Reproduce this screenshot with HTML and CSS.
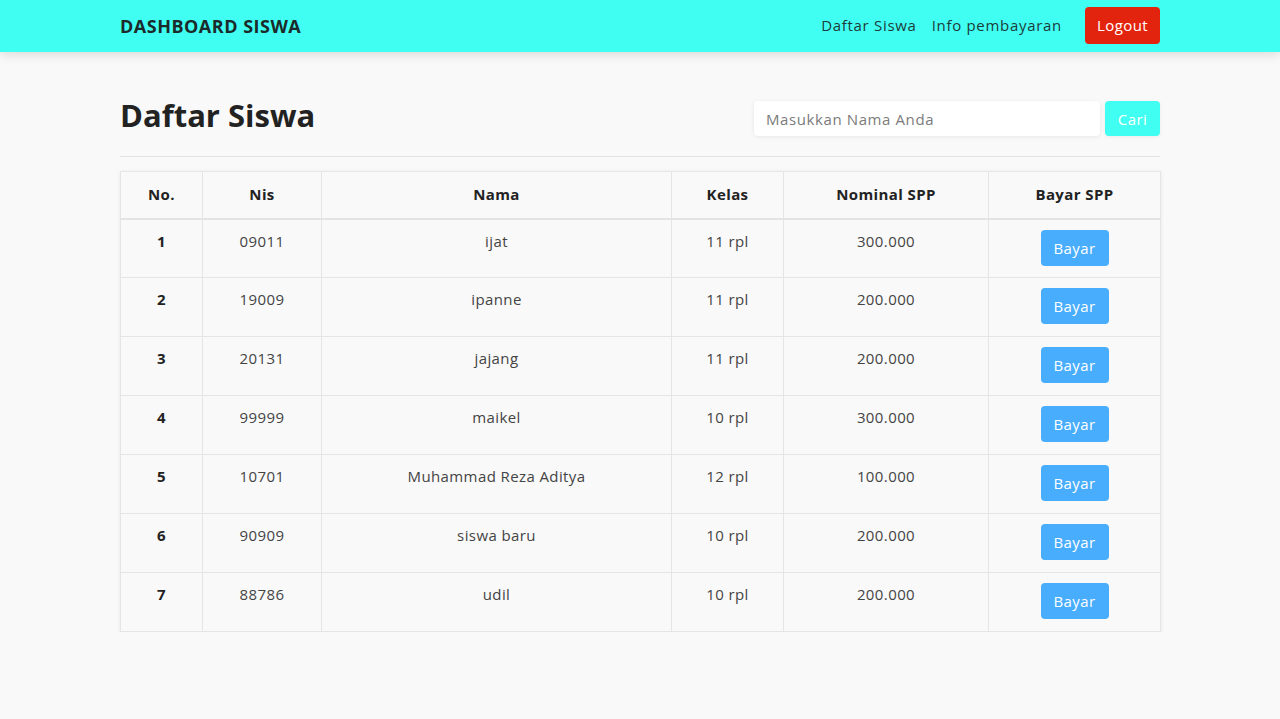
FILE: index.html
```html
<!DOCTYPE html>
<html lang="id">
<head>
<meta charset="utf-8">
<title>Dashboard Siswa</title>
<link rel="stylesheet" href="styles.css">
</head>
<body>
<nav class="navbar">
  <div class="container nav-inner">
    <a class="brand" href="#">DASHBOARD SISWA</a>
    <div class="nav-links">
      <a href="#" class="nav-link">Daftar Siswa</a>
      <a href="#" class="nav-link">Info pembayaran</a>
      <a href="#" class="btn-logout">Logout</a>
    </div>
  </div>
</nav>
<main class="container">
  <div class="page-head">
    <h1 class="title">Daftar Siswa</h1>
    <form class="search">
      <input class="search-input" type="text" placeholder="Masukkan Nama Anda">
      <button class="btn-cari" type="button">Cari</button>
    </form>
  </div>
  <hr class="divider">
  <table class="data-table">
    <colgroup>
      <col class="c1"><col class="c2"><col class="c3"><col class="c4"><col class="c5"><col class="c6">
    </colgroup>
    <thead>
      <tr><th>No.</th><th>Nis</th><th>Nama</th><th>Kelas</th><th>Nominal SPP</th><th>Bayar SPP</th></tr>
    </thead>
    <tbody>
      <tr><th>1</th><td>09011</td><td>ijat</td><td>11 rpl</td><td>300.000</td><td><a class="btn-bayar" href="#">Bayar</a></td></tr>
      <tr><th>2</th><td>19009</td><td>ipanne</td><td>11 rpl</td><td>200.000</td><td><a class="btn-bayar" href="#">Bayar</a></td></tr>
      <tr><th>3</th><td>20131</td><td>jajang</td><td>11 rpl</td><td>200.000</td><td><a class="btn-bayar" href="#">Bayar</a></td></tr>
      <tr><th>4</th><td>99999</td><td>maikel</td><td>10 rpl</td><td>300.000</td><td><a class="btn-bayar" href="#">Bayar</a></td></tr>
      <tr><th>5</th><td>10701</td><td>Muhammad Reza Aditya</td><td>12 rpl</td><td>100.000</td><td><a class="btn-bayar" href="#">Bayar</a></td></tr>
      <tr><th>6</th><td>90909</td><td>siswa baru</td><td>10 rpl</td><td>200.000</td><td><a class="btn-bayar" href="#">Bayar</a></td></tr>
      <tr><th>7</th><td>88786</td><td>udil</td><td>10 rpl</td><td>200.000</td><td><a class="btn-bayar" href="#">Bayar</a></td></tr>
    </tbody>
  </table>
</main>
</body>
</html>
```

FILE: styles.css
```css
* { box-sizing: border-box; }
body {
  margin: 0;
  background: #f9f9f9;
  font-family: "Open Sans", "DejaVu Sans", sans-serif;
  color: #444;
  font-size: 15px;
  letter-spacing: 0.4px;
}
.container {
  width: 1040px;
  margin: 0 auto;
}
.navbar {
  background: #40fff2;
  height: 52px;
  box-shadow: 0 3px 10px rgba(0,0,0,0.12);
}
.nav-inner {
  display: flex;
  align-items: center;
  justify-content: space-between;
  height: 52px;
}
.brand {
  font-weight: 700;
  font-size: 18px;
  color: #1b2a2a;
  text-decoration: none;
  letter-spacing: 0.5px;
}
.nav-links {
  display: flex;
  align-items: center;
  gap: 15px;
}
.nav-link {
  color: #1d3b3b;
  text-decoration: none;
  font-size: 15px;
  letter-spacing: 0.7px;
  margin-top: -2px;
}
.btn-logout {
  margin-left: 8px;
  background: #e2240e;
  color: #fff;
  text-decoration: none;
  font-size: 15px;
  height: 37px;
  width: 75px;
  display: flex;
  align-items: center;
  justify-content: center;
  border-radius: 4px;
  margin-top: -1px;
  padding-bottom: 2px;
}
.page-head {
  display: flex;
  justify-content: space-between;
  align-items: center;
  margin-top: 49px;
}
.title {
  margin: -7px 0 0;
  font-size: 31px;
  font-weight: 700;
  color: #222;
  line-height: 34px;
  letter-spacing: 0;
}
.search {
  display: flex;
  gap: 5px;
  margin: 0;
}
.search-input {
  width: 346px;
  height: 35px;
  border: none;
  border-radius: 4px;
  background: #fff;
  box-shadow: 0 1px 4px rgba(0,0,0,0.08);
  padding: 0 12px;
  font-family: inherit;
  font-size: 15px;
  letter-spacing: 0.6px;
  color: #333;
}
.search-input::placeholder { color: #7b7b7b; }
.btn-cari {
  width: 55px;
  height: 35px;
  border: none;
  border-radius: 4px;
  background: #40fff2;
  color: #fff;
  font-family: inherit;
  font-size: 15px;
  letter-spacing: 0.4px;
  box-shadow: 0 1px 4px rgba(0,0,0,0.06);
}
.divider {
  border: none;
  border-top: 1px solid #e3e3e3;
  margin: 20px 0 14px;
}
.data-table {
  width: 100%;
  border-collapse: collapse;
  box-shadow: 0 1px 4px rgba(0,0,0,0.08);
  table-layout: fixed;
}
.c1 { width: 82px; }
.c2 { width: 119px; }
.c3 { width: 350px; }
.c4 { width: 112px; }
.c5 { width: 205px; }
.c6 { width: 172px; }
.data-table th,
.data-table td {
  border: 1px solid #e5e5e5;
  text-align: center;
  vertical-align: top;
  padding: 10px 8px 0;
  line-height: 22px;
  height: 59px;
}
.data-table thead th {
  height: 47px;
  vertical-align: middle;
  padding: 0 8px 2px;
  border-bottom: 2px solid #e3e3e3;
  color: #222;
  font-weight: 700;
}
.data-table tbody th {
  color: #222;
  font-weight: 700;
}
.btn-bayar {
  display: inline-flex;
  align-items: center;
  justify-content: center;
  width: 68px;
  height: 36px;
  background: #48adfc;
  color: #fff;
  text-decoration: none;
  border-radius: 4px;
  font-size: 15px;
  margin-top: 0;
}
```
